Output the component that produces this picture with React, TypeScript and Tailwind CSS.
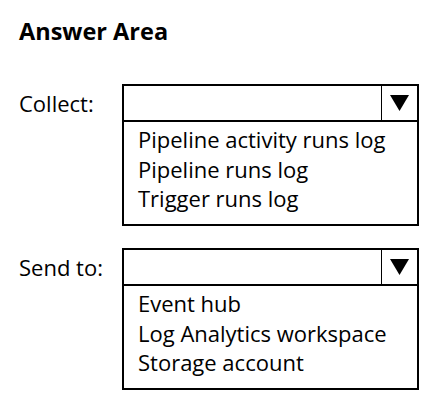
import React from "react";

function Dropdown({ items }: { items: string[] }) {
  return (
    <div className="w-[297px] h-[142px] border-2 border-black flex flex-col">
      <div className="h-[36px] border-b-2 border-black flex">
        <div className="flex-1" />
        <div className="w-[36px] border-l border-black flex items-center justify-center">
          <svg width="19" height="16" viewBox="0 0 19 16">
            <polygon points="0,0 19,0 9.5,16" fill="black" />
          </svg>
        </div>
      </div>
      <div className="pl-[14px] pt-[3px] flex flex-col">
        {items.map((t) => (
          <div key={t} className="text-[22px] leading-[29.5px] text-black">
            {t}
          </div>
        ))}
      </div>
    </div>
  );
}

export default function App() {
  return (
    <div
      className="w-[440px] h-[403px] bg-white pl-[19px] pt-[16px] text-black"
      style={{ fontFamily: '"Open Sans", "Noto Sans", sans-serif' }}
    >
      <div className="text-[23.5px] font-bold leading-[30px]">Answer Area</div>
      <div className="mt-[38px] flex flex-col gap-[22px]">
        <div className="flex">
          <div className="w-[103px] text-[22px] leading-[36px] pt-[1px]">Collect:</div>
          <Dropdown items={["Pipeline activity runs log", "Pipeline runs log", "Trigger runs log"]} />
        </div>
        <div className="flex">
          <div className="w-[103px] text-[22px] leading-[36px] pt-[1px]">Send to:</div>
          <Dropdown items={["Event hub", "Log Analytics workspace", "Storage account"]} />
        </div>
      </div>
    </div>
  );
}
